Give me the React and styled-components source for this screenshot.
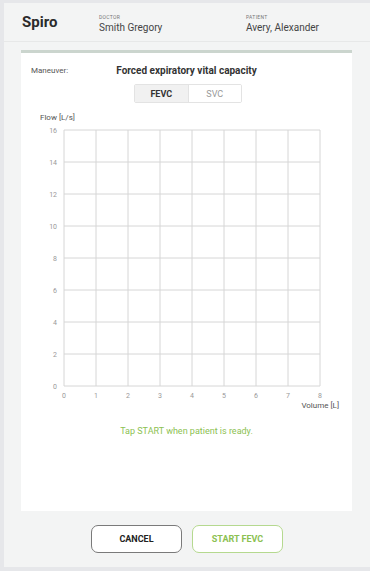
import React from 'react';
import styled, { createGlobalStyle } from 'styled-components';

const GlobalStyle = createGlobalStyle`
  html, body {
    margin: 0;
    padding: 0;
    background: #e6e7ea;
  }
  body {
    font-family: Roboto, "Liberation Sans", sans-serif;
  }
`;

const Frame = styled.div`
  width: 370px;
  height: 571px;
  box-sizing: border-box;
  padding: 3px 0 4px 4px;
  background: #e6e7ea;
`;

const Screen = styled.div`
  height: 100%;
  background: #f3f4f4;
  display: flex;
  flex-direction: column;
`;

const Header = styled.div`
  height: 38px;
  border-bottom: 1px solid #e7e8e8;
  display: flex;
  align-items: center;
  padding-left: 18px;
`;

const AppTitle = styled.div`
  font-size: 15px;
  font-weight: 700;
  color: #2b2b2b;
  width: 77px;
`;

const Field = styled.div`
  display: flex;
  flex-direction: column;
  width: ${(p) => p.width}px;
  margin-top: 2px;
`;

const FieldLabel = styled.div`
  font-size: 5px;
  letter-spacing: 0.3px;
  color: #777;
  text-transform: uppercase;
  margin-bottom: 2px;
`;

const FieldValue = styled.div`
  font-size: 10px;
  color: #444;
`;

const Card = styled.div`
  margin: 8px 18px 0 17px;
  height: 461px;
  box-sizing: border-box;
  background: #fff;
  border-top: 3px solid #cbd5ce;
  display: flex;
  flex-direction: column;
`;

const ManeuverRow = styled.div`
  position: relative;
  height: 12px;
  margin-top: 11px;
  display: flex;
  justify-content: center;
  align-items: center;
`;

const ManeuverLabel = styled.span`
  position: absolute;
  left: 10px;
  font-size: 8px;
  color: #555;
`;

const ManeuverName = styled.span`
  font-size: 10px;
  font-weight: 700;
  color: #333;
`;

const Segmented = styled.div`
  align-self: center;
  margin-top: 8px;
  margin-left: 3px;
  display: flex;
  width: 108px;
  height: 19px;
  border: 1px solid #e3e3e3;
  border-radius: 2px;
  box-sizing: border-box;
  overflow: hidden;
`;

const Segment = styled.div`
  flex: 1;
  display: flex;
  align-items: center;
  justify-content: center;
  font-size: 9px;
  font-weight: ${(p) => (p.active ? 700 : 400)};
  color: ${(p) => (p.active ? '#333' : '#999')};
  background: ${(p) => (p.active ? '#f1f1f1' : '#fff')};
  & + & {
    border-left: 1px solid #e3e3e3;
  }
`;

const ChartBox = styled.svg`
  display: block;
  margin-top: 7px;
`;

const Hint = styled.div`
  margin-top: 16px;
  text-align: center;
  font-size: 9px;
  color: #8cc152;
`;

const Footer = styled.div`
  display: flex;
  justify-content: center;
  gap: 10px;
  margin-top: 14px;
`;

const Button = styled.button`
  width: 91px;
  height: 28px;
  box-sizing: border-box;
  border-radius: 7px;
  background: #fff;
  border: 1px solid ${(p) => (p.primary ? '#b5d98f' : '#7a7a7a')};
  color: ${(p) => (p.primary ? '#8cc152' : '#222')};
  font-family: Roboto, "Liberation Sans", sans-serif;
  font-size: 9px;
  font-weight: 700;
  cursor: pointer;
`;

function FlowChart() {
  const left = 43;
  const top = 20;
  const step = 32;
  const cols = 8;
  const rows = 8;
  const right = left + cols * step;
  const bottom = top + rows * step;
  const vLines = Array.from({ length: cols + 1 }, (_, i) => left + i * step);
  const hLines = Array.from({ length: rows + 1 }, (_, i) => top + i * step);

  return (
    <ChartBox width="331" height="300" viewBox="0 0 331 300">
      <text x="19" y="10" fontSize="8" fill="#555" fontFamily="Roboto, sans-serif">Flow [L/s]</text>
      {vLines.map((x) => (
        <line key={'v' + x} x1={x} y1={top} x2={x} y2={bottom} stroke="#d6d6d6" strokeWidth="1" />
      ))}
      {hLines.map((y) => (
        <line key={'h' + y} x1={left} y1={y} x2={right} y2={y} stroke="#d6d6d6" strokeWidth="1" />
      ))}
      {hLines.map((y, i) => (
        <text key={'yl' + i} x="36" y={y + 2.5} fontSize="7" fill="#999" textAnchor="end" fontFamily="Roboto, sans-serif">
          {16 - i * 2}
        </text>
      ))}
      {vLines.map((x, i) => (
        <text key={'xl' + i} x={x} y={bottom + 12} fontSize="7" fill="#999" textAnchor="middle" fontFamily="Roboto, sans-serif">
          {i}
        </text>
      ))}
      <text x="318" y={bottom + 22} fontSize="8" fill="#555" textAnchor="end" fontFamily="Roboto, sans-serif">Volume [L]</text>
    </ChartBox>
  );
}

export default function App() {
  return (
    <Frame>
      <GlobalStyle />
      <Screen>
        <Header>
          <AppTitle>Spiro</AppTitle>
          <Field width={147}>
            <FieldLabel>Doctor</FieldLabel>
            <FieldValue>Smith Gregory</FieldValue>
          </Field>
          <Field width={110}>
            <FieldLabel>Patient</FieldLabel>
            <FieldValue>Avery, Alexander</FieldValue>
          </Field>
        </Header>
        <Card>
          <ManeuverRow>
            <ManeuverLabel>Maneuver:</ManeuverLabel>
            <ManeuverName>Forced expiratory vital capacity</ManeuverName>
          </ManeuverRow>
          <Segmented>
            <Segment active>FEVC</Segment>
            <Segment>SVC</Segment>
          </Segmented>
          <FlowChart />
          <Hint>Tap START when patient is ready.</Hint>
        </Card>
        <Footer>
          <Button>CANCEL</Button>
          <Button primary>START FEVC</Button>
        </Footer>
      </Screen>
    </Frame>
  );
}
